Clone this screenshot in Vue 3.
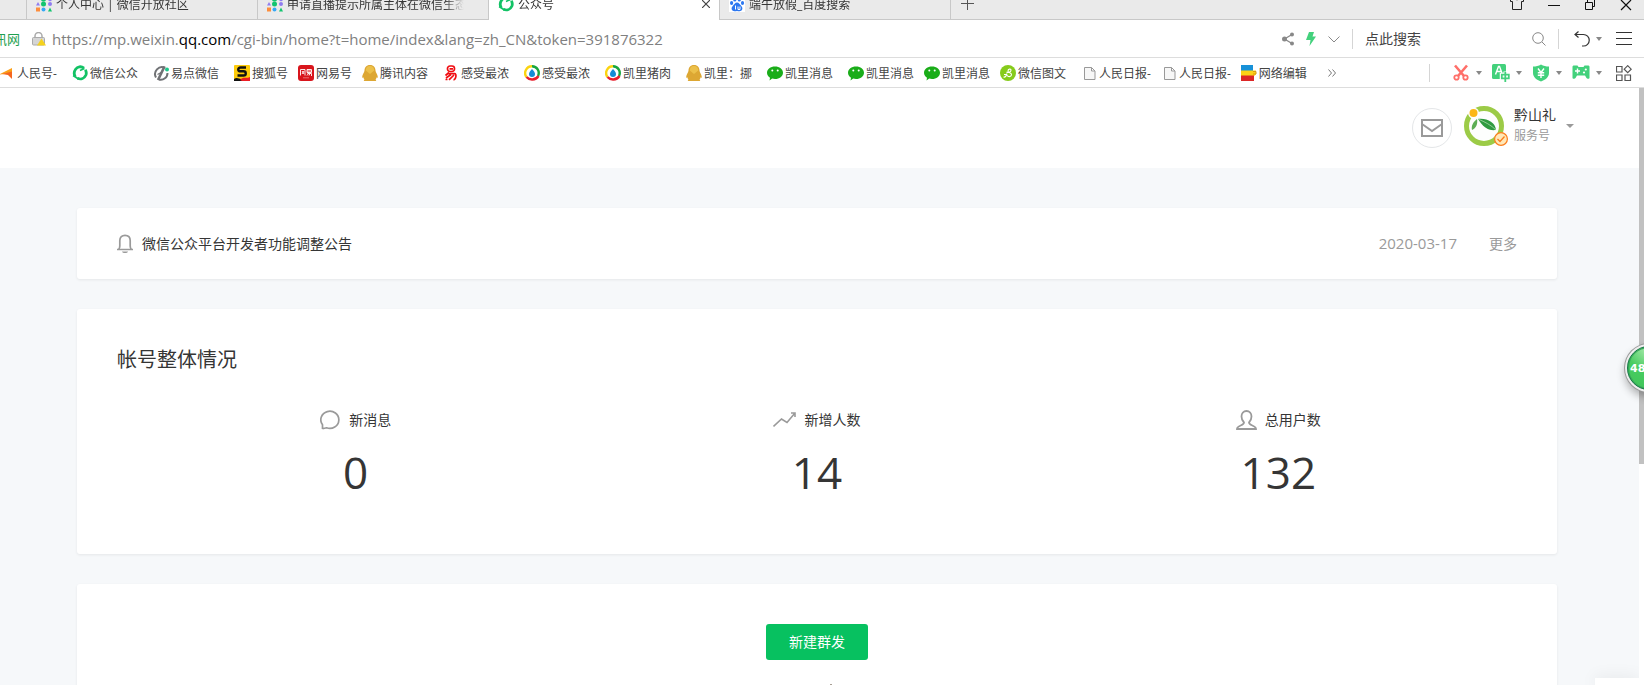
<template>
  <div class="browser">
    <!-- 图标定义 -->
    <svg class="sprite" aria-hidden="true">
      <symbol id="i-community" viewBox="0 0 16 16">
        <path d="M0 4 2 0 4 4z" fill="#8f7cf0" />
        <circle cx="7.5" cy="3" r="2.6" fill="#12c46f" />
        <circle cx="14" cy="3.5" r="1.8" fill="#8f7cf0" />
        <path d="M0 9.500 2 6l2 3.500z" fill="#8f7cf0" />
        <circle cx="7.500" cy="8" r="2.500" fill="#12c46f" />
        <circle cx="14" cy="8" r="2" fill="#8f7cf0" />
        <rect x="0" y="11.500" width="4" height="4" fill="#fd8d3c" />
        <circle cx="7.500" cy="13.500" r="2" fill="#35a8f5" />
        <path d="m12 15.500 2-4 2 4z" fill="#12c46f" />
      </symbol>
      <symbol id="i-mp" viewBox="0 0 16 16">
        <g fill="none" stroke="#12c265" stroke-width="2.800">
          <path d="M12 3.200C9 .8 5.500 1.500 3.600 4.200 2 6.500 2 9.500 3.200 11.500" />
          <path d="M5.500 13.300c3.500 1.500 7 0 8.300-3 .8-2 .5-4-.5-5.500" />
          <path d="M1.200 10.500 6.500 14" stroke-width="2" />
          <path d="M8 5.500 12.500 3.500" stroke-width="1.600" />
        </g>
      </symbol>
      <symbol id="i-baidu" viewBox="0 0 16 16">
        <rect width="16" height="16" fill="#fff" />
        <g fill="#2d78f0">
          <ellipse cx="5.800" cy="3.200" rx="1.700" ry="2.400" />
          <ellipse cx="10.300" cy="3.200" rx="1.700" ry="2.400" />
          <ellipse cx="2.600" cy="7" rx="1.600" ry="2.100" />
          <ellipse cx="13.500" cy="7" rx="1.600" ry="2.100" />
          <path d="M8 6.500c2 0 2.800 2 4.300 3.500 2.300 2.500.7 5.200-1.800 5.200-1 0-1.500-.3-2.500-.3s-1.500.3-2.500.3c-2.500 0-4.100-2.700-1.800-5.200C5.200 8.500 6 6.500 8 6.500z" />
        </g>
        <path d="M6.500 9.500v4M9 10.500v3h2v-3" stroke="#fff" fill="none" />
      </symbol>
      <symbol id="i-people" viewBox="0 0 16 16">
        <path d="M0 9.500 13 3v5z" fill="#fba019" />
        <path d="m3 9 10-2.500V14L9 10z" fill="#f5661f" />
      </symbol>
      <symbol id="i-yidian" viewBox="0 0 16 16">
        <path d="M12 2.700A7 7 0 0 0 3 12.500M6 14.500c4.500 1 8.500-2 8.500-6.500" fill="none" stroke="#707275" stroke-width="2" />
        <path d="M11.500 1.500 5 15" stroke="#707275" stroke-width="2.600" />
        <path d="M4.500 9.500 9 7" stroke="#707275" stroke-width="1.200" />
        <circle cx="14" cy="4.500" r="2" fill="#1ec98a" />
      </symbol>
      <symbol id="i-sohu" viewBox="0 0 16 16">
        <rect width="16" height="16" rx="1" fill="#fdcb0a" />
        <path d="M0 14c3-2 5 0 7 0l2 2H0z" fill="#111" />
        <path d="M6 15c3-4 6-1 10-3v4H8z" fill="#ed1c24" />
        <path d="M12 2.500H6.500c-3 0-3 3.800 0 3.800h3c3 0 3 4.200 0 4.200H3.500" fill="none" stroke="#111" stroke-width="2.400" />
      </symbol>
      <symbol id="i-netease" viewBox="0 0 16 16">
        <rect width="16" height="16" rx="3" fill="#d8151c" />
        <path d="M2.500 10.500v-6h4.500v6M4 6l2 3M6 6 4 9M9 4.500h4.500v3H9zM9 6h4.500M9.500 8.500h4v2.500M9 10.500l1.500-2M11 10.500l1-2" stroke="#fff" stroke-width=".9" fill="none" />
        <path d="M5 12.800h6" stroke="#e88" stroke-width=".8" />
      </symbol>
      <symbol id="i-penguin" viewBox="0 0 16 16">
        <path d="M8 0c3.800 0 5.500 2.500 5.500 5.500 0 2 2.300 4 2.300 6.500 0 1.200-1 1-1.500.2 0 1.300 0 1.800-.8 2.300l.8 1.500H1.700l.8-1.500c-.8-.5-.8-1-.8-2.300-.5.800-1.500 1-1.500-.2 0-2.500 2.300-4.500 2.300-6.500C2.500 2.500 4.200 0 8 0z" fill="#dda733" />
        <path d="M8 1c3 0 4.200 2 4.200 4.500L8 9 3.800 5.500C3.800 3 5 1 8 1z" fill="#ecc04a" />
      </symbol>
      <symbol id="i-yi" viewBox="0 0 16 16">
        <g fill="none" stroke="#f00d12" stroke-width="1.700">
          <rect x="4.500" y="1" width="7" height="5.500" rx="2.500" />
          <path d="M6.500 3.800h3.500M6 7.500 2.500 10.500M4.500 8.700h7c2.500 0 1.500 6-1 6.100M8 9.500l-5 3.500M11 10 6 14.800M2.500 14.500h2" />
        </g>
      </symbol>
      <symbol id="i-qqcom" viewBox="0 0 16 16">
        <path d="M8 1.300A6.700 6.700 0 0 0 2.500 12" fill="none" stroke="#fbd410" stroke-width="2.400" />
        <path d="M8 1.300A6.700 6.700 0 0 1 14 11" fill="none" stroke="#19a63f" stroke-width="2.400" />
        <path d="M2.500 12c3 3.500 9 3.500 12-1" fill="none" stroke="#e81f2c" stroke-width="2.400" />
        <path d="M8 4c1.500 1.500 3 3.500 3 5a3 3 0 0 1-6 0C5 7.500 6.500 5.500 8 4z" fill="#128cd6" />
      </symbol>
      <symbol id="i-wechat" viewBox="0 0 16 16">
        <path d="M8 1.500c4.500 0 8 2.700 8 6.200s-3.500 6.300-8 6.300c-1 0-2-.1-2.800-.4L2.500 15.500 3 12.700C1.200 11.500 0 9.700 0 7.700 0 4.200 3.500 1.500 8 1.500z" fill="#1aad19" />
        <circle cx="5.300" cy="5.500" r="1" fill="#fff" />
        <circle cx="10.700" cy="5.500" r="1" fill="#fff" />
      </symbol>
      <symbol id="i-tuwen" viewBox="0 0 16 16">
        <circle cx="8" cy="8" r="8" fill="#86cb1b" />
        <path d="M6.500 7c1.500 1 4.500 0 4.500-1.800S8 3.800 8 6s4 1.500 3.500 3.800-4 2.500-4 .5M3.500 12c2 .5 3-1.500 3.500-3.500M4 9.500h3" fill="none" stroke="#fff" stroke-width="1.100" />
      </symbol>
      <symbol id="i-file" viewBox="0 0 16 16">
        <path d="M3.500 2.500h7l3.500 3.500v8.500H3.500zM10.500 2.500V6H14" fill="#f7f7f7" stroke="#999" />
      </symbol>
      <symbol id="i-editor" viewBox="0 0 16 16">
        <path d="M0 0h12v6H0z" fill="#1791d8" />
        <path d="M0 5.500h15v4l-2 1.500H0z" fill="#fcd116" />
        <path d="M0 10.500h13V16H0z" fill="#dc2626" />
        <path d="M12 6.500h3v2.500h-3" fill="none" stroke="#d99b12" />
      </symbol>
      <symbol id="i-scissors" viewBox="0 0 18 18">
        <path d="M3 1.500 12 12M15 1.500 6 12" stroke="#ff6f69" stroke-width="2.600" />
        <circle cx="4.500" cy="13.500" r="2.200" fill="none" stroke="#ff6f69" stroke-width="1.800" />
        <circle cx="13.500" cy="13.500" r="2.200" fill="none" stroke="#ff6f69" stroke-width="1.800" />
      </symbol>
      <symbol id="i-translate" viewBox="0 0 18 18">
        <rect width="14" height="15" rx="1.500" fill="#43d17c" />
        <path d="m3.500 10.500 3-8h1l3 8M4.700 7.500h4.600" stroke="#fff" stroke-width="1.400" fill="none" />
        <path d="M9.500 10.500H17v4H9.500zM13.200 7.500V18" stroke="#fff" stroke-width="3.500" fill="none" />
        <path d="M9.800 10.700h7v3.600h-7zM13.300 8v10" stroke="#43d17c" stroke-width="1.800" fill="none" />
      </symbol>
      <symbol id="i-shield" viewBox="0 0 18 18">
        <path d="M9 .5c2.500 1.500 5 2 8 2V9c0 4-3.500 7-8 8.500C4.500 16 1 13 1 9V2.500c3 0 5.500-.5 8-2z" fill="#43d17c" />
        <path d="m6 4.500 3 4 3-4M9 8.500V14M5.800 8.800h6.400M5.800 11.300h6.400" stroke="#fff" stroke-width="1.400" fill="none" />
      </symbol>
      <symbol id="i-game" viewBox="0 0 18 18">
        <path d="M2 1.500h3.500L6.500 3h5l1-1.500H16c1 0 1.500.5 1.500 1.500v11c0 1-2.500 1-3 0l-1.500-2.500H5L3.500 14c-.5 1-3 1-3 0V3c0-1 .5-1.500 1.500-1.500z" fill="#43d17c" />
        <path d="M5.500 4.500v5M3 7h5" stroke="#fff" stroke-width="1.400" />
        <circle cx="13.800" cy="5.500" r="1.100" fill="#fff" />
        <circle cx="12" cy="8.500" r="1.100" fill="#fff" />
      </symbol>
    </svg>

    <!-- 标签栏 -->
    <header class="tab-bar">
      <div class="tabs">
        <button v-for="tab in tabs" :key="tab.title" class="tab" :class="{ active: tab.active }">
          <svg class="favicon"><use :href="'#i-' + tab.icon" /></svg>
          <span class="tab-title">{{ tab.title }}</span>
          <svg v-if="tab.active" class="tab-close" viewBox="0 0 8 8">
            <path d="m0 0 8 8M8 0 0 8" stroke="#444" stroke-width="1.200" />
          </svg>
        </button>
        <button class="new-tab" aria-label="新建标签页">
          <svg width="13" height="13" viewBox="0 0 13 13"><path d="M6.500 0v13M0 6.500h13" stroke="#555" /></svg>
        </button>
      </div>
      <div class="window-controls">
        <button aria-label="皮肤">
          <svg width="14" height="14" viewBox="0 0 14 14"><path d="M.5.500h4c0 3 5 3 5 0h4v4h-2v8h-9v-8h-2z" fill="none" stroke="#222" /></svg>
        </button>
        <button aria-label="最小化">
          <svg width="12" height="14" viewBox="0 0 12 14"><path d="M0 8.500h12" stroke="#111" /></svg>
        </button>
        <button aria-label="还原">
          <svg width="12" height="14" viewBox="0 0 12 14"><path d="M1.500 5.500h7v7h-7zM3.500 5V2.500h7v7H9" fill="none" stroke="#111" /></svg>
        </button>
        <button aria-label="关闭">
          <svg width="12" height="14" viewBox="0 0 12 14"><path d="m1 3 10 10M11 3 1 13" stroke="#111" stroke-width="1.200" /></svg>
        </button>
      </div>
    </header>

    <!-- 地址栏 -->
    <div class="address-bar">
      <span class="site-name">讯网</span>
      <svg class="lock" width="14" height="14" viewBox="0 0 14 14">
        <path d="M3 6V4a3.500 3.500 0 0 1 7 0v2" fill="none" stroke="#aaa" stroke-width="1.500" />
        <rect x=".5" y="5.500" width="12" height="7.500" rx="1" fill="#d5d5d5" stroke="#aaa" />
        <path d="m9.500 6.500 4.500 7H5z" fill="#f5d21d" />
      </svg>
      <div class="url">https://mp.weixin.<b>qq.com</b>/cgi-bin/home?t=home/index&amp;lang=zh_CN&amp;token=391876322</div>
      <div class="address-tools">
        <svg width="12" height="14" viewBox="0 0 12 14">
          <path d="M10 2.500 2.500 7l7.500 4.500" fill="none" stroke="#888" stroke-width="1.300" />
          <circle cx="10" cy="2.500" r="2" fill="#888" />
          <circle cx="2.500" cy="7" r="2.500" fill="#888" />
          <circle cx="10" cy="11.500" r="2" fill="#888" />
        </svg>
        <svg width="10" height="14" viewBox="0 0 10 14"><path d="M3 0h5L6.500 4.500H10L3.500 14 4.500 8H0z" fill="#43d17c" /></svg>
        <svg width="12" height="14" viewBox="0 0 12 14"><path d="m.5 4.500 5.500 5.500 5.500-5.500" fill="none" stroke="#888" /></svg>
      </div>
      <label class="search">
        <input type="text" placeholder="点此搜索" aria-label="点此搜索" />
        <svg width="14" height="14" viewBox="0 0 14 14"><circle cx="6" cy="6" r="5.300" fill="none" stroke="#888" /><path d="m10 10 3.500 3.500" stroke="#888" /></svg>
      </label>
      <button class="undo" aria-label="恢复">
        <svg width="16" height="16" viewBox="0 0 16 16"><path d="M4.500.500 1 3.500l3.500 3M1 3.500h8.500a5.500 5.500 0 0 1 0 11.500H8" fill="none" stroke="#333" stroke-width="1.200" /></svg>
        <i class="caret"></i>
      </button>
      <button class="menu" aria-label="菜单">
        <svg width="16" height="14" viewBox="0 0 16 14"><path d="M0 .5h16M0 6.500h16M0 12.500h16" stroke="#333" /></svg>
      </button>
    </div>

    <!-- 书签栏 -->
    <nav class="bookmark-bar">
      <div class="bookmarks">
        <a v-for="(mark, i) in bookmarks" :key="i" href="#" class="bookmark" :class="{ tight: mark.tight }">
          <svg class="favicon"><use :href="'#i-' + mark.icon" /></svg>
          <span>{{ mark.name }}</span>
        </a>
        <button class="more-marks" aria-label="更多书签">
          <svg width="8" height="8" viewBox="0 0 8 8"><path d="m.5.500 3 3.500-3 3.500M4.500.500l3 3.500-3 3.500" fill="none" stroke="#777" /></svg>
        </button>
      </div>
      <div class="extensions">
        <button v-for="ext in extensions" :key="ext.icon" class="extension" :aria-label="ext.label">
          <svg width="18" height="18"><use :href="'#i-' + ext.icon" /></svg>
          <i class="caret"></i>
        </button>
        <button class="apps" aria-label="扩展">
          <svg width="16" height="16" viewBox="0 0 16 16"><path d="M.5 1.500h5.500V7H.5zM.5 10h5.500v5.500H.5zM9 10h5.500v5.500H9z" fill="none" stroke="#555" stroke-width="1.200" /><path d="m11.700.7 3.500 3.500-3.500 3.500-3.500-3.500z" fill="none" stroke="#555" stroke-width="1.200" /></svg>
        </button>
      </div>
    </nav>

    <!-- 页面 -->
    <div class="viewport">
      <div class="page">
        <div class="page-header">
          <button class="mail" aria-label="通知">
            <svg width="22" height="18" viewBox="0 0 22 18"><path d="M1 1h20v16H1zM1 5l10 7 10-7" fill="none" stroke="#9a9a9a" stroke-width="2" /></svg>
          </button>
          <button class="account">
            <span class="avatar">
              <svg width="40" height="40" viewBox="0 0 40 40">
                <circle cx="20" cy="20" r="17.500" fill="#fdfefd" stroke="#9ccb47" stroke-width="5" />
                <circle cx="9.500" cy="7" r="5.500" fill="#fff" />
                <circle cx="9.500" cy="7" r="4" fill="#fcb716" />
                <path d="M14 13c9-1 17 3 18 11-8 1-13-3-18-11z" fill="#2f9b40" />
                <path d="M14 13c7 3 13 6 18 11" stroke="#a8d8a8" stroke-width=".8" fill="none" />
                <path d="M13 13c1 5-1 9-5 11-1-4 1-8 5-11z" fill="#5cae54" />
              </svg>
              <svg class="verified" width="14" height="14" viewBox="0 0 14 14">
                <circle cx="7" cy="7" r="6.400" fill="#ffe8b8" stroke="#fb7d1c" stroke-width="1.200" />
                <path d="m3.500 7 2.500 2.500 4.500-5" fill="none" stroke="#fb7d1c" stroke-width="1.300" />
              </svg>
            </span>
            <span class="account-info">
              <span class="account-name">黔山礼</span>
              <span class="account-type">服务号</span>
            </span>
            <i class="caret large"></i>
          </button>
        </div>

        <main class="content">
          <section class="card notice">
            <svg width="16" height="20" viewBox="0 0 16 20">
              <path d="M0 15.500h16M1.500 15.500c1-1 1.300-2 1.300-3.500V6.500C2.800 3 5 1.300 8 1.300s5.200 1.700 5.200 5.200V12c0 1.500.3 2.500 1.300 3.500" fill="none" stroke="#9a9a9a" stroke-width="1.700" />
              <path d="M5 17.500h6c-.5 2-5.500 2-6 0z" fill="#9a9a9a" />
            </svg>
            <a href="#" class="notice-title">微信公众平台开发者功能调整公告</a>
            <time class="notice-date">2020-03-17</time>
            <a href="#" class="notice-more">更多</a>
          </section>

          <section class="card overview">
            <h2>帐号整体情况</h2>
            <div class="stats">
              <div v-for="stat in stats" :key="stat.label" class="stat">
                <div class="stat-label">
                  <svg :width="stat.width" height="20" :viewBox="`0 0 ${stat.width} 20`">
                    <path :d="stat.path" fill="none" stroke="#9a9a9a" :stroke-width="stat.stroke" />
                  </svg>
                  <span>{{ stat.label }}</span>
                </div>
                <div class="stat-value">{{ stat.value }}</div>
              </div>
            </div>
          </section>

          <section class="card publish">
            <button class="primary">新建群发</button>
            <svg width="30" height="20" viewBox="0 0 30 20"><path d="M28 0h2v1h-2z" fill="#a89f94" /></svg>
          </section>
        </main>
        <div class="side-panel"></div>
      </div>
      <div class="scrollbar"><div class="thumb"></div></div>
    </div>

    <button class="speed-ball">48</button>
  </div>
</template>

<script setup>
const tabs = [
  { title: '个人中心 | 微信开放社区', icon: 'community' },
  { title: '申请直播提示所属主体在微信生态', icon: 'community' },
  { title: '公众号', icon: 'mp', active: true },
  { title: '端午放假_百度搜索', icon: 'baidu' }
];

const bookmarks = [
  { name: '人民号-', icon: 'people' },
  { name: '微信公众', icon: 'mp' },
  { name: '易点微信', icon: 'yidian' },
  { name: '搜狐号', icon: 'sohu', tight: true },
  { name: '网易号', icon: 'netease', tight: true },
  { name: '腾讯内容', icon: 'penguin' },
  { name: '感受最浓', icon: 'yi' },
  { name: '感受最浓', icon: 'qqcom' },
  { name: '凯里猪肉', icon: 'qqcom' },
  { name: '凯里：挪', icon: 'penguin' },
  { name: '凯里消息', icon: 'wechat' },
  { name: '凯里消息', icon: 'wechat', tight: true },
  { name: '凯里消息', icon: 'wechat', tight: true },
  { name: '微信图文', icon: 'tuwen' },
  { name: '人民日报-', icon: 'file', tight: true },
  { name: '人民日报-', icon: 'file', tight: true },
  { name: '网络编辑', icon: 'editor' }
];

const extensions = [
  { icon: 'scissors', label: '截图' },
  { icon: 'translate', label: '翻译' },
  { icon: 'shield', label: '网银' },
  { icon: 'game', label: '游戏' }
];

const stats = [
  {
    label: '新消息',
    value: 0,
    width: 21,
    stroke: 1.7,
    path: 'M2.500 19V14.800A9 8.600 0 1 1 6.500 17.800L2.500 18.800'
  },
  {
    label: '新增人数',
    value: 14,
    width: 23,
    stroke: 1.6,
    path: 'M.5 16.500 8.500 9l5.500 3.500 8-9.500M18 3h4v4'
  },
  {
    label: '总用户数',
    value: 132,
    width: 21,
    stroke: 1.8,
    path: 'M8 12.500C6 10.500 5.500 8.500 5.500 6.500c0-3 2-5.500 5-5.500s5 2.500 5 5.500c0 2-.5 4-2.500 6 0 3.500 7 2.500 7 6.500H1c0-4 7-3 7-6.500z'
  }
];
</script>

<style>
body {
  overflow: hidden;
}
</style>

<style scoped>
.browser {
  position: relative;
  display: flex;
  flex-direction: column;
  height: 100vh;
  overflow: hidden;
  background: #fff;
  color: #353535;
  font-family: "Open Sans", "Noto Sans CJK SC", sans-serif;
  font-size: 12px;
}

.browser * {
  box-sizing: border-box;
}

button {
  padding: 0;
  border: none;
  background: none;
  font: inherit;
  color: inherit;
  cursor: pointer;
}

a {
  color: inherit;
  text-decoration: none;
}

svg {
  flex-shrink: 0;
}

.sprite {
  position: absolute;
  width: 0;
  height: 0;
}

.favicon {
  width: 16px;
  height: 16px;
}

.caret {
  border: 3px solid transparent;
  border-top: 4px solid #888;
  border-bottom: none;
}

.caret.large {
  border-width: 4px 4px 0;
  border-top-color: #9a9a9a;
}

/* 标签栏 */
.tab-bar {
  display: flex;
  justify-content: space-between;
  height: 20px;
  overflow: hidden;
  background: #eaeaea;
}

.tabs {
  display: flex;
  flex: 1;
  align-items: flex-end;
  padding-left: 26px;
  border-bottom: 1px solid #c8c8c8;
}

.tab {
  display: flex;
  align-items: center;
  gap: 4px;
  width: 231px;
  height: 31px;
  padding: 0 9px;
  border-left: 1px solid #c8c8c8;
  text-align: left;
}

.tab.active {
  height: 32px;
  margin-bottom: -1px;
  background: #fff;
}

.tab-title {
  flex: 1;
  margin-right: 15px;
  overflow: hidden;
  white-space: nowrap;
  mask-image: linear-gradient(to right, #000 calc(100% - 20px), transparent);
}

.tab.active .tab-title {
  margin-right: 0;
}

.tab-close {
  width: 8px;
  height: 8px;
}

.new-tab {
  display: flex;
  align-items: center;
  height: 31px;
  padding: 0 10px;
  border-left: 1px solid #c8c8c8;
}

.window-controls {
  display: flex;
  align-items: flex-start;
  gap: 24px;
  padding-right: 12px;
  border-bottom: 1px solid #c8c8c8;
}

.window-controls button {
  display: flex;
  margin-top: -3px;
}

/* 地址栏 */
.address-bar {
  display: flex;
  align-items: center;
  height: 38px;
  padding-right: 12px;
  border-bottom: 1px solid #ddd;
}

.site-name {
  margin-left: -6px;
  font-size: 13px;
  color: #1fa050;
}

.lock {
  margin: 0 6px 0 12px;
}

.url {
  flex: 1;
  overflow: hidden;
  font-size: 15px;
  line-height: 24px;
  white-space: nowrap;
  color: #808080;
}

.url b {
  font-weight: 400;
  color: #000;
}

.address-tools {
  display: flex;
  gap: 12px;
  padding-right: 12px;
}

.search {
  display: flex;
  align-items: center;
  width: 207px;
  height: 20px;
  padding: 0 12px;
  border-left: 1px solid #d5d5d5;
  border-right: 1px solid #d5d5d5;
}

.search input {
  flex: 1;
  min-width: 0;
  padding: 0;
  border: none;
  outline: none;
  background: none;
  font: inherit;
  font-size: 14px;
}

.search input::placeholder {
  color: #444;
}

.undo {
  display: flex;
  align-items: center;
  gap: 6px;
  padding: 0 14px 0 15px;
}

.menu {
  display: flex;
}

/* 书签栏 */
.bookmark-bar {
  display: flex;
  align-items: center;
  justify-content: space-between;
  height: 30px;
  padding-right: 12px;
  border-bottom: 1px solid #ddd;
}

.bookmarks {
  display: flex;
  align-items: center;
  margin-left: -1px;
  color: #444;
}

.bookmark {
  display: flex;
  align-items: center;
  gap: 2px;
  padding-right: 15px;
  white-space: nowrap;
}

.bookmark.tight {
  padding-right: 10px;
}

.more-marks {
  display: flex;
  padding-left: 6px;
}

.extensions {
  display: flex;
  align-items: center;
  padding-left: 22px;
  border-left: 1px solid #d5d5d5;
}

.extension {
  display: flex;
  align-items: center;
  gap: 6px;
  width: 40px;
}

.apps {
  display: flex;
  padding-left: 4px;
}

/* 页面 */
.viewport {
  display: flex;
  flex: 1;
  min-height: 0;
}

.page {
  position: relative;
  flex: 1;
  overflow: hidden;
  background: #f6f8fa;
}

.scrollbar {
  width: 5px;
}

.thumb {
  height: 63%;
  background: #c1c1c1;
}

.page-header {
  display: flex;
  align-items: center;
  justify-content: flex-end;
  gap: 12px;
  height: 80px;
  padding-right: 65px;
  background: #fff;
}

.mail {
  display: flex;
  align-items: center;
  justify-content: center;
  width: 40px;
  height: 40px;
  border: 1px solid #e4e6e8;
  border-radius: 50%;
}

.account {
  display: flex;
  align-items: center;
  gap: 10px;
  padding-bottom: 4px;
  text-align: left;
}

.avatar {
  position: relative;
  display: flex;
}

.verified {
  position: absolute;
  right: -4px;
  bottom: 0;
}

.account-info {
  display: flex;
  flex-direction: column;
}

.account-name {
  font-size: 14px;
  line-height: 20px;
}

.account-type {
  line-height: 22px;
  color: #9a9a9a;
}

.content {
  display: flex;
  flex-direction: column;
  gap: 30px;
  padding: 40px 82px 0 77px;
}

.card {
  border-radius: 3px;
  background: #fff;
  box-shadow: 0 1px 3px rgba(0, 0, 0, 0.07);
}

.notice {
  display: flex;
  align-items: center;
  padding: 24px 40px;
  font-size: 14px;
  line-height: 23px;
}

.notice-title {
  flex: 1;
  margin-left: 9px;
}

.notice-date {
  margin-right: 32px;
  font-size: 15px;
  color: #9a9a9a;
}

.notice-more {
  color: #9a9a9a;
}

.overview {
  padding: 37px 40px 52px;
}

.overview h2 {
  margin: 0 0 35px;
  font-size: 20px;
  font-weight: 400;
  line-height: 28px;
}

.stats {
  display: grid;
  grid-template-columns: repeat(3, 1fr);
  padding: 0 8px;
}

.stat {
  display: flex;
  flex-direction: column;
  align-items: center;
  gap: 11px;
}

.stat-label {
  display: flex;
  align-items: center;
  gap: 8px;
  font-size: 14px;
  line-height: 22px;
}

.stat-value {
  font-size: 44px;
  line-height: 60px;
}

.publish {
  display: flex;
  flex-direction: column;
  align-items: center;
  gap: 24px;
  padding: 40px;
}

.primary {
  padding: 0 23px;
  border-radius: 3px;
  background: #07c160;
  font-size: 14px;
  line-height: 36px;
  color: #fff;
}

/* 浮层 */
.side-panel {
  position: absolute;
  right: 0;
  bottom: 0;
  width: 44px;
  height: 7px;
  background: #fff;
  box-shadow: 0 0 16px rgba(0, 0, 0, 0.1);
}

.speed-ball {
  position: absolute;
  top: 346px;
  right: -27px;
  width: 44px;
  height: 44px;
  padding-left: 2px;
  border: 1px solid #137a45;
  border-radius: 50%;
  background: radial-gradient(circle at 50% 0, #b4edb4, #48cc60 50%, #3fc45a);
  box-shadow: inset 0 0 0 1px #3aa85a, 0 0 0 2px #eee, 0 0 0 3px #999, 0 5px 8px 2px rgba(0, 0, 0, 0.3);
  font-family: "DejaVu Sans", sans-serif;
  font-size: 11px;
  font-weight: 700;
  text-align: left;
  color: #fff;
}
</style>
